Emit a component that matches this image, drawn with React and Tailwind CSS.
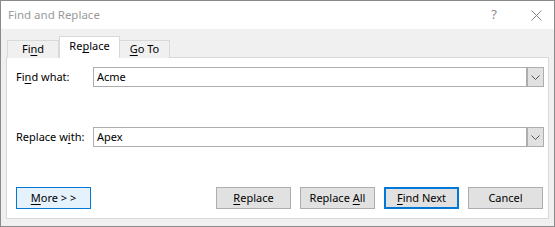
import React from "react";

const U = ({ children }) => <span className="underline underline-offset-[2px] decoration-[1px]">{children}</span>;

function Chevron() {
  return (
    <svg width="9" height="5" viewBox="0 0 9 5" className="block">
      <path d="M0.5 0.5 L4.5 4.5 L8.5 0.5" fill="none" stroke="#555" strokeWidth="1" />
    </svg>
  );
}

function Combo({ value }) {
  return (
    <div className="flex h-[20px] w-[451px] border border-[#adadad] bg-white">
      <div className="flex-1 pl-[3px] leading-[18px] text-black">{value}</div>
      <div className="flex w-[17px] items-center justify-center border-l-2 border-[#adadad] bg-[#e1e1e1]">
        <Chevron />
      </div>
    </div>
  );
}

function Btn({ children, cls = "border border-[#adadad] bg-[#e1e1e1]" }) {
  return (
    <div className={`flex h-[22px] w-[75px] items-center justify-center text-black ${cls}`}>
      <span className="whitespace-pre">{children}</span>
    </div>
  );
}

export default function App() {
  return (
    <div
      className="flex h-[227px] w-[555px] flex-col border border-[#8a8a8a] bg-[#f0f0f0] text-[11px]"
      style={{ fontFamily: '"Segoe UI", "Noto Sans", sans-serif' }}
    >
      <div className="flex h-[28px] items-center justify-between bg-white pl-[7px] pr-[12px]">
        <span className="text-[11.5px] text-[#9a9a9a]">Find and Replace</span>
        <div className="flex items-center gap-[34px] text-[#8a8a8a]">
          <span className="text-[13px]">?</span>
          <svg width="11" height="11" viewBox="0 0 11 11">
            <path d="M0.5 0.5 L10.5 10.5 M10.5 0.5 L0.5 10.5" stroke="#888" strokeWidth="1" />
          </svg>
        </div>
      </div>
      <div className="flex flex-1 flex-col px-[5px] pb-[7px] pt-[7px]">
        <div className="relative z-10 flex h-[22px] items-end pl-[1px]">
          <div className="flex h-[18px] w-[52px] items-center justify-center border border-b-0 border-[#d9d9d9] bg-[#f0f0f0] text-black">
            <span>Fi<U>n</U>d</span>
          </div>
          <div className="flex h-[22px] w-[61px] items-center justify-center border border-b-0 border-[#d9d9d9] bg-white pb-[2px] text-black">
            <span>Re<U>p</U>lace</span>
          </div>
          <div className="flex h-[18px] w-[50px] items-center justify-center border border-b-0 border-l-0 border-[#d9d9d9] bg-[#f0f0f0] text-black">
            <span><U>G</U>o To</span>
          </div>
        </div>
        <div className="-mt-px flex flex-1 flex-col border border-[#d9d9d9] bg-white pl-[9px] pr-[4px] pt-[9px]">
          <div className="flex items-center">
            <div className="w-[77px] text-black">Fi<U>n</U>d what:</div>
            <Combo value="Acme" />
          </div>
          <div className="mt-[40px] flex items-center">
            <div className="w-[77px] text-black">Replace w<U>i</U>th:</div>
            <Combo value="Apex" />
          </div>
          <div className="mt-[40px] flex items-center">
            <Btn cls="border border-[#0078d7] bg-[#e5f1fb]"><U>M</U>ore &gt; &gt;</Btn>
            <div className="flex-1" />
            <div className="flex gap-[9px] pr-[1px]">
              <Btn><U>R</U>eplace</Btn>
              <Btn>{"Replace "}<U>A</U>ll</Btn>
              <Btn cls="border-2 border-[#0078d7] bg-[#e1e1e1]"><U>F</U>ind Next</Btn>
              <Btn>Cancel</Btn>
            </div>
          </div>
        </div>
      </div>
    </div>
  );
}
